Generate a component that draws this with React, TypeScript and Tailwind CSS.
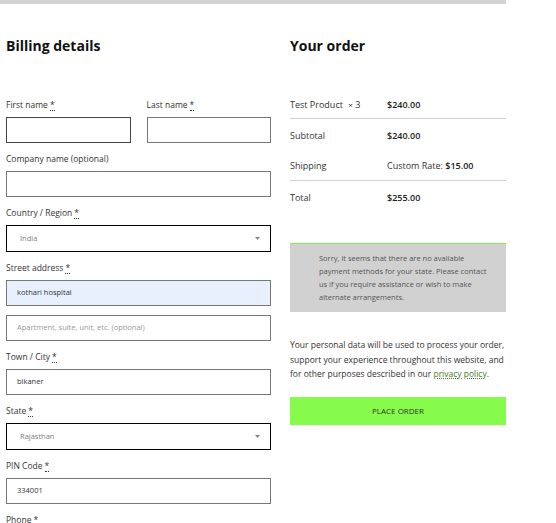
import React from "react";

function Req() {
  return (
    <abbr className="ml-[2px] no-underline border-b border-dotted border-[#333]" title="required">
      *
    </abbr>
  );
}

function Label({ text, req }: { text: string; req?: boolean }) {
  return (
    <div className="h-[14px] leading-[14px] text-[8.5px] text-[#333] mb-[5px] whitespace-nowrap">
      {text}
      {req && <Req />}
    </div>
  );
}

function Input({ value, placeholder, cls }: { value?: string; placeholder?: string; cls?: string }) {
  return (
    <div
      className={
        "h-[26px] border flex items-center px-[10px] text-[7.5px] " +
        (cls ?? "border-[#777] bg-white")
      }
    >
      {value ? <span className="text-[#333]">{value}</span> : <span className="text-[#999]">{placeholder}</span>}
    </div>
  );
}

function Select({ value }: { value: string }) {
  return (
    <div className="h-[27px] border border-black flex items-center justify-between pl-[13px] pr-[10px] text-[7.5px] text-[#808080]">
      <span>{value}</span>
      <svg width="5" height="3" viewBox="0 0 5 3">
        <path d="M0 0H5L2.5 3Z" fill="#888" />
      </svg>
    </div>
  );
}

export default function App() {
  return (
    <div className="w-[556px] h-[523px] overflow-hidden bg-white text-[#333] font-['Open_Sans',sans-serif]">
      <div className="w-[506px] h-[4px] bg-[#d3d3d3]" />
      <div className="flex pl-[6px] w-[506px]">
        {/* Left column */}
        <div className="w-[265px] shrink-0">
          <h2 className="mt-[32px] h-[20px] leading-[20px] text-[14px] font-bold text-[#111]">Billing details</h2>
          <div className="mt-[42px] flex flex-col gap-[9px]">
            <div className="flex gap-[16px]">
              <div className="flex-1">
                <Label text="First name" req />
                <Input cls="border-[#444] bg-white" />
              </div>
              <div className="flex-1">
                <Label text="Last name" req />
                <Input />
              </div>
            </div>
            <div>
              <Label text="Company name (optional)" />
              <Input />
            </div>
            <div>
              <Label text="Country / Region" req />
              <Select value="India" />
            </div>
            <div>
              <Label text="Street address" req />
              <Input value="kothari hospital" cls="border-[#777] bg-[#e8f0fe]" />
              <div className="mt-[9px]">
                <Input placeholder="Apartment, suite, unit, etc. (optional)" />
              </div>
            </div>
            <div>
              <Label text="Town / City" req />
              <Input value="bikaner" />
            </div>
            <div>
              <Label text="State" req />
              <Select value="Rajasthan" />
            </div>
            <div>
              <Label text="PIN Code" req />
              <Input value="334001" />
            </div>
            <div>
              <Label text="Phone" req />
              <Input />
            </div>
          </div>
        </div>

        {/* Right column */}
        <div className="ml-[19px] w-[216px] shrink-0">
          <h2 className="mt-[32px] h-[20px] leading-[20px] text-[14px] font-bold text-[#111]">Your order</h2>
          <div className="mt-[32px] text-[9px]">
            <div className="flex h-[31px] pt-[3px] items-center border-b border-[#d0d0d0]">
              <div className="w-[97px] text-[#333]">
                Test Product <span className="ml-[3px] text-[8px]">×</span> 3
              </div>
              <div className="font-semibold text-[#222]">$240.00</div>
            </div>
            <div className="flex h-[31px] pt-[3px] items-center">
              <div className="w-[97px] text-[#333]">Subtotal</div>
              <div className="font-semibold text-[#222]">$240.00</div>
            </div>
            <div className="flex h-[31px] pt-[2px] items-center border-b border-[#d0d0d0]">
              <div className="w-[97px] text-[#333]">Shipping</div>
              <div className="text-[#333]">
                Custom Rate: <span className="font-semibold text-[#222]">$15.00</span>
              </div>
            </div>
            <div className="flex h-[31px] pt-[3px] items-center">
              <div className="w-[97px] text-[#333]">Total</div>
              <div className="font-semibold text-[#222]">$255.00</div>
            </div>
          </div>

          <div className="mt-[31px] border-t border-[#7ef04a] bg-[#d1d1d1] pt-[8px] pb-[8px] pl-[29px] pr-[8px] text-[7.5px] leading-[13px] text-[#555]">
            <div className="whitespace-nowrap">Sorry, it seems that there are no available</div>
            <div className="whitespace-nowrap">payment methods for your state. Please contact</div>
            <div className="whitespace-nowrap">us if you require assistance or wish to make</div>
            <div className="whitespace-nowrap">alternate arrangements.</div>
          </div>

          <div className="mt-[26px] text-[8.5px] leading-[14.5px] text-[#333]">
            <div className="whitespace-nowrap">Your personal data will be used to process your order,</div>
            <div className="whitespace-nowrap">support your experience throughout this website, and</div>
            <div className="whitespace-nowrap">
              for other purposes described in our{" "}
              <span className="text-[#4a7a25] underline decoration-dotted">privacy policy</span>.
            </div>
          </div>

          <div className="mt-[15px] h-[28px] bg-[#86fb4c] flex items-center justify-center text-[8px] text-[#333]">
            PLACE ORDER
          </div>
        </div>
      </div>
    </div>
  );
}
